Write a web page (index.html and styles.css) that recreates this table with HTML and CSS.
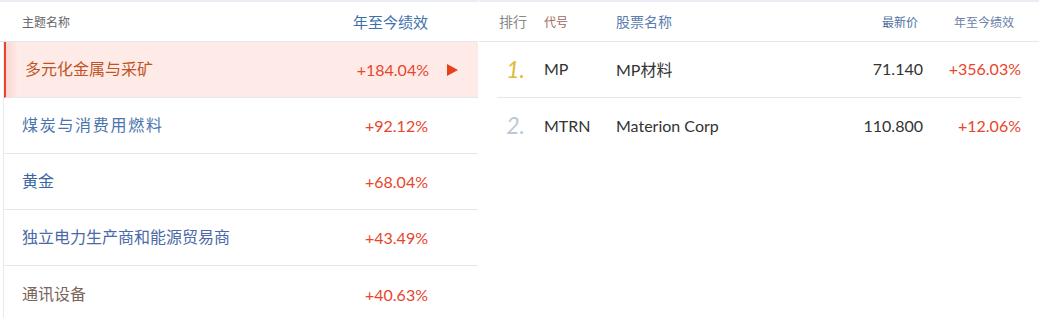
FILE: index.html
```html
<!DOCTYPE html>
<html lang="zh">
<head>
<meta charset="utf-8">
<link rel="stylesheet" href="styles.css">
</head>
<body>
<div class="page">
  <section class="themes">
    <div class="themes-head">
      <span class="th-name">主题名称</span>
      <span class="th-perf">年至今绩效</span>
    </div>
    <ul class="theme-list">
      <li class="theme active">
        <span class="tname c-orange">多元化金属与采矿</span>
        <span class="tval">+184.04%</span>
        <span class="arrow"></span>
      </li>
      <li class="theme">
        <span class="tname c-blue wide">煤炭与消费用燃料</span>
        <span class="tval">+92.12%</span>
      </li>
      <li class="theme">
        <span class="tname c-navy">黄金</span>
        <span class="tval">+68.04%</span>
      </li>
      <li class="theme">
        <span class="tname c-blue2">独立电力生产商和能源贸易商</span>
        <span class="tval">+43.49%</span>
      </li>
      <li class="theme">
        <span class="tname c-brown">通讯设备</span>
        <span class="tval">+40.63%</span>
      </li>
    </ul>
  </section>
  <section class="stocks">
    <div class="stocks-head">
      <span class="h-rank">排行</span>
      <span class="h-code">代号</span>
      <span class="h-name">股票名称</span>
      <span class="h-price">最新价</span>
      <span class="h-perf">年至今绩效</span>
    </div>
    <ul class="stock-list">
      <li class="stock">
        <span class="rank gold">1.</span>
        <span class="code">MP</span>
        <span class="sname">MP材料</span>
        <span class="price">71.140</span>
        <span class="perf">+356.03%</span>
      </li>
      <li class="stock">
        <span class="rank silver">2.</span>
        <span class="code">MTRN</span>
        <span class="sname">Materion Corp</span>
        <span class="price">110.800</span>
        <span class="perf">+12.06%</span>
      </li>
    </ul>
  </section>
</div>
</body>
</html>
```

FILE: styles.css
```css
* { box-sizing: border-box; }
html, body {
  margin: 0;
  padding: 0;
  background: #fff;
}
body {
  font-family: Lato, "Noto Sans CJK SC", sans-serif;
  color: #333;
}
ul { list-style: none; margin: 0; padding: 0; }

.page {
  display: flex;
  gap: 1px;
  width: 1039px;
}

/* ---------- left: themes ---------- */
.themes {
  width: 478px;
  flex: none;
  border-top: 2px solid #e9edf4;
}
.themes-head {
  height: 40px;
  display: flex;
  align-items: center;
  justify-content: space-between;
  padding: 0 50px 1px 22px;
  border-bottom: 1px solid #e3e8f0;
}
.th-name {
  font-size: 12px;
  color: #666;
}
.th-perf {
  font-size: 15px;
  color: #3d6fab;
}
.theme-list {
  margin-left: 3px;
  border-left: 1px solid #e7ebf1;
}
.theme {
  height: 56px;
  display: flex;
  align-items: center;
  padding: 0 50px 0 18px;
  border-bottom: 1px solid #e3e8f0;
}
.theme:last-child { border-bottom: none; }
.theme.active {
  border-left: 2px solid #e8452c;
  padding: 0 20px 0 19px;
  background: linear-gradient(to right, rgba(232, 69, 44, 0.13), rgba(232, 69, 44, 0) 12px), #feebe8;
}
.tname {
  flex: 1;
  font-size: 16px;
  margin-top: -3px;
}
.tname.wide { letter-spacing: 1.7px; }
.tval {
  font-size: 16px;
  color: #e8452c;
}
.arrow {
  width: 0;
  height: 0;
  margin-left: 18px;
  border-top: 6.5px solid transparent;
  border-bottom: 6.5px solid transparent;
  border-left: 11px solid #e8401c;
}
.c-orange { color: #bf5423; }
.c-blue { color: #4a74ad; }
.c-navy { color: #3b65a0; }
.c-blue2 { color: #4a69a6; }
.c-brown { color: #7a665a; }

/* ---------- right: stocks ---------- */
.stocks {
  flex: 1;
  border-top: 2px solid #e9edf4;
}
.stocks-head {
  height: 40px;
  display: grid;
  grid-template-columns: 45px 72px 1fr 100px 98px;
  align-items: center;
  padding: 0 18px 1px 20px;
  border-bottom: 1px solid #e3e8f0;
}
.h-rank { font-size: 14px; color: #888; }
.h-code { font-size: 12px; color: #a0675e; }
.h-name { font-size: 14px; color: #5b7cae; }
.h-price { font-size: 12px; color: #4f6fa0; text-align: right; padding-right: 5px; }
.h-perf { font-size: 12px; color: #6b7fa8; text-align: right; padding-right: 7px; }

.stock-list {
  margin: 0 17px 0 18px;
}
.stock {
  height: 56px;
  display: grid;
  grid-template-columns: 45px 72px 1fr 100px 98px;
  align-items: center;
  padding: 0 1px 2px 2px;
  border-bottom: 1px solid #e3e8f0;
  font-size: 16px;
  color: #333;
}
.stock:last-child { border-bottom: none; }
.rank {
  font-size: 23px;
  font-style: italic;
  text-align: right;
  padding-right: 19px;
}
.rank.gold { color: #e2b838; }
.rank.silver { color: #bcc7d9; }
.price { text-align: right; }
.perf { text-align: right; color: #e8452c; }
```
